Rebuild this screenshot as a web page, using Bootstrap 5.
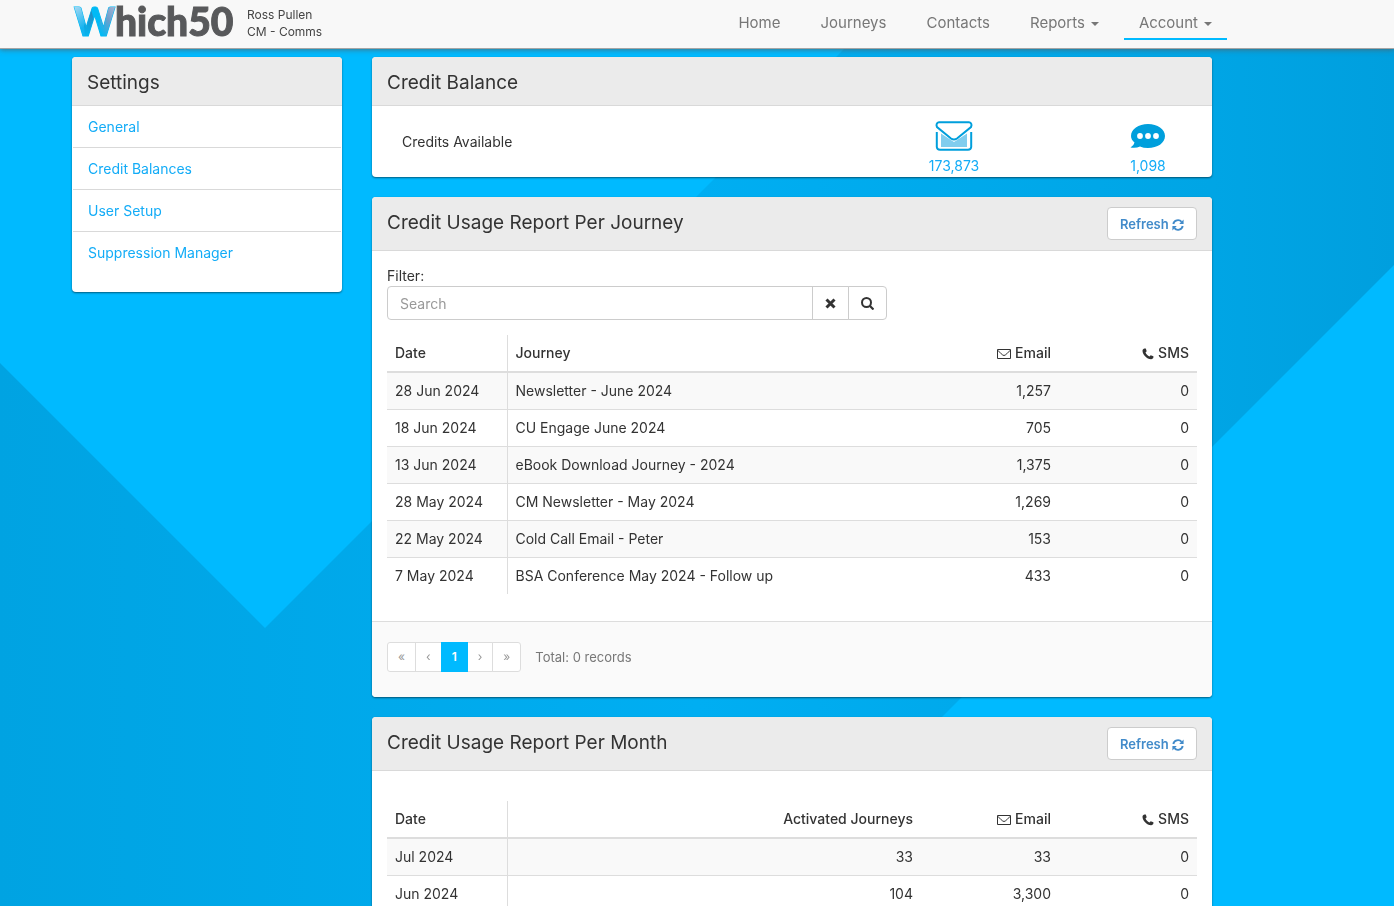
<!DOCTYPE html>
<html lang="en">
<head>
<meta charset="utf-8">
<meta name="viewport" content="width=device-width, initial-scale=1">
<title>Credit Balances - Which50</title>
<link href="https://cdn.jsdelivr.net/npm/bootstrap@5.3.0/dist/css/bootstrap.min.css" rel="stylesheet">
<style>
body{font-family:Inter,"Open Sans",sans-serif;font-size:14px;line-height:20px;color:#333;background:#00baff}
a{color:#13acf7;text-decoration:none}
.backdrop{position:fixed;inset:0;width:100%;height:100%;z-index:-1}
.page-col{max-width:1170px;margin-left:57px;padding:0 15px}
.page-col.bar{padding-right:0}
.columns{column-gap:30px}
.topbar{background:#f8f8f8;height:49px;border-bottom:1px solid #a5a5a5;box-shadow:0 1px 5px rgba(90,90,90,.7)}
.who{font-size:12px;line-height:17px;color:#444;padding:6px 0 0 11px}
.topbar .nav-link{color:#777;font-size:15px;padding:13px 20px 7px;line-height:20px}
.topbar .nav-link.active{padding:13px 15px 5px;border-bottom:2px solid #00baff;margin-left:5px}
.topbar .dropdown-toggle::after{border-top-width:4px;border-left-width:4px;border-right-width:4px;margin-left:6px;vertical-align:2px}
.side{flex:0 0 270px}
.panel{background:#fff;border-radius:4px;box-shadow:0 1px 2px rgba(0,0,0,.5);overflow:hidden;margin-bottom:20px}
.panel-head{background:#ebebeb;border-bottom:1px solid #d9d9d9;padding:10px 15px 6px}
.panel-head h2{font-size:19px;line-height:32px;margin:0;font-weight:400}
.panel-head.tall{padding-bottom:10px}
.panel-main{padding:15px 15px 0}
.menu{padding-bottom:19px}
.menu a{display:block;padding:11px 15px 10px;line-height:20px;border-bottom:1px solid #d9d9d9;margin:0 1px}
.menu a:last-child{border-bottom:0}
.btn-refresh{background:#fff;border:1px solid #ccc;border-radius:4px;color:#428bca;font-size:13px;font-weight:600;line-height:20px;padding:5px 12px;height:33px}
.search{max-width:500px}
.search .form-control,.search .btn{height:34px;font-size:14px;border:1px solid #ccc;background:#fff;padding:6px 12px;line-height:20px;color:#333;border-radius:4px}
.search .form-control::placeholder{color:#999}
.search .btn{display:flex;align-items:center}
.report{margin:15px 0 0;--bs-table-striped-bg:#f9f9f9;--bs-table-striped-color:#333;color:#333;table-layout:fixed}
.report>:not(caption)>*>*{padding:8px;line-height:20px;border-bottom:1px solid #ddd}
.report thead th{font-weight:500;border-bottom-width:2px}
.report tbody tr:last-child>*{border-bottom:0}
.report .c-date{width:120px;border-right:1px solid #ddd}
.report .c-num{width:138px}
.panel-foot{background:#fafafa;border-top:1px solid #ddd;padding:20px 15px 25px;margin-top:27px}
.pagination .page-link{font-size:12px;line-height:18px;height:30px;padding:5px 10px;color:#999;border-color:#ddd}
.pagination .page-item:first-child .page-link{border-radius:3px 0 0 3px}
.pagination .page-item:last-child .page-link{border-radius:0 3px 3px 0}
.pagination .page-item.active .page-link{background:#00baff;border-color:#00baff;color:#fff;font-weight:600}
.total{font-size:13px;color:#777;margin-left:14px}
.credits{height:71px;padding-left:30px}
.credit{width:128px;padding-top:15px}
.credit.mail{width:260px}
.credit svg{display:block;margin:0 auto 5px}
</style>
</head>
<body>
<svg class="backdrop" viewBox="0 0 1394 906" preserveAspectRatio="xMinYMin slice" aria-hidden="true">
  <defs><linearGradient id="band" gradientUnits="userSpaceOnUse" x1="0" y1="0" x2="1394" y2="0"><stop offset="0" stop-color="#00a3e2"/><stop offset=".5" stop-color="#00aef2"/><stop offset=".87" stop-color="#00a5e5"/><stop offset="1" stop-color="#009fde"/></linearGradient></defs>
  <path fill="url(#band)" d="M0 363 265 628 893 0H1394V265L753 906H0Z"/>
</svg>
<header class="topbar position-relative">
  <div class="page-col bar d-flex align-items-start">
    <a href="#" aria-label="Which50">
      <svg class="d-block" width="164" height="48" viewBox="0 0 164 48">
        <defs>
          <linearGradient id="wa" x1="0" y1="0" x2=".4" y2="1"><stop offset="0" stop-color="#b5dcf3"/><stop offset=".8" stop-color="#14b4f0"/></linearGradient>
          <linearGradient id="wb" x1="0" y1="0" x2="0" y2="1"><stop offset="0" stop-color="#2f7fb5"/><stop offset="1" stop-color="#00baf5"/></linearGradient>
          <linearGradient id="wd" x1="1" y1="0" x2=".3" y2="1"><stop offset="0" stop-color="#a9b6d5"/><stop offset=".5" stop-color="#6d9fcb"/><stop offset="1" stop-color="#00baf5"/></linearGradient>
          <clipPath id="wc"><text x="2" y="36" font-family="Lato,sans-serif" font-weight="900" font-size="39">W</text></clipPath>
        </defs>
        <text x="2" y="36" font-family="Lato,sans-serif" font-weight="900" font-size="39"><tspan fill="#00baf5" stroke="#00baf5">W</tspan><tspan fill="#58595b" stroke="#58595b">hich50</tspan></text>
        <g clip-path="url(#wc)"><path fill="url(#wa)" d="M0 6H11L18 38H8Z"/><path fill="url(#wb)" d="M18 6 22 20 16 38H13L12 26Z"/><path fill="url(#wd)" d="M44 6H32L27 25 28 38H34Z"/></g>
      </svg>
    </a>
    <div class="who">Ross Pullen<br>CM - Comms</div>
    <nav class="nav ms-auto flex-nowrap" aria-label="Main">
      <a class="nav-link" href="#">Home</a>
      <a class="nav-link" href="#">Journeys</a>
      <a class="nav-link" href="#">Contacts</a>
      <a class="nav-link dropdown-toggle" href="#">Reports</a>
      <a class="nav-link dropdown-toggle active" href="#">Account</a>
    </nav>
  </div>
</header>
<svg class="d-none">
  <symbol id="i-env" viewBox="0 0 14 12"><path d="M.5 1.500h13v9H.5zM.7 2.200C3 4.500 5.500 7.500 7 7.500S11 4.500 13.300 2.200" fill="none" stroke="currentColor"/></symbol>
  <symbol id="i-tel" viewBox="0 0 12 12"><path fill="currentColor" d="M2.500.4 3.800.6 4.700 3.200 3.500 4.400C4.200 6.100 5.600 7.500 7.500 8.500L8.700 7.200 11.400 8.300C11.700 9.700 11 11 9.300 11.300 5 11.500.3 6.500.5 2.600.7 1.300 1.500.6 2.500.4Z"/></symbol>
  <symbol id="i-ref" viewBox="0 0 12 12"><path d="M1.300 5A4.800 4.800 0 0 1 9.600 2.800M10.700 7A4.800 4.800 0 0 1 2.400 9.200" fill="none" stroke="currentColor" stroke-width="1.900"/><path fill="currentColor" d="M11.600.6V5H7.200ZM.4 11.400V7H4.800Z"/></symbol>
</svg>
<main class="page-col columns d-flex flex-column flex-lg-row pt-2">
  <aside class="side">
    <section class="panel">
      <div class="panel-head"><h2>Settings</h2></div>
      <nav class="menu" aria-label="Settings"><a href="#">General</a><a href="#">Credit Balances</a><a href="#">User Setup</a><a href="#">Suppression Manager</a></nav>
    </section>
  </aside>
  <div class="flex-grow-1">
    <section class="panel">
      <div class="panel-head"><h2>Credit Balance</h2></div>
      <div class="credits d-flex">
        <div class="flex-grow-1 align-self-center">Credits Available</div>
        <div class="credit mail text-center"><svg width="38" height="30" viewBox="0 0 38 30"><path d="M6 12.500 19 21l13-8.500V26H6Z" fill="#80cdee"/><path d="M4 1.300H34C36.500 1.500 37 4 36 6L22 17.500Q19 19.500 16 17.500L2 6C1 4 1.500 1.500 4 1.300Z" fill="#fff" stroke="#009fdc" stroke-width="2"/><path d="M1.800 11V26Q2 28.700 5 28.700H33Q36 28.700 36.200 26V11" fill="none" stroke="#009fdc" stroke-width="2"/></svg><a href="#">173,873</a></div>
        <div class="credit text-center"><svg width="36" height="30" viewBox="0 0 36 30"><path fill="#009fdc" d="M18 3C27.500 3 35 8 35 15S27.500 27 18 27Q13.500 27 10 25.500 6 27.500.5 26.500 4 24.500 4.500 21.500 1 18.500 1 15C1 8 8.500 3 18 3Z"/><g fill="#fff"><circle cx="10" cy="15" r="2.900"/><circle cx="18" cy="15" r="2.900"/><circle cx="26" cy="15" r="2.900"/></g></svg><a href="#">1,098</a></div>
      </div>
    </section>
    <section class="panel">
      <div class="panel-head tall d-flex justify-content-between"><h2>Credit Usage Report Per Journey</h2><button class="btn btn-refresh" type="button">Refresh <svg width="12" height="12"><use href="#i-ref"/></svg></button></div>
      <div class="panel-main">
        <label class="d-block" for="q">Filter:</label>
        <div class="input-group search">
          <input class="form-control" id="q" type="text" placeholder="Search">
          <button class="btn" type="button" aria-label="Clear"><svg width="11" height="11" viewBox="0 0 11 11"><path d="m1.500 1.500 8 8m0-8-8 8" stroke="#333" stroke-width="3"/></svg></button>
          <button class="btn" type="button" aria-label="Search"><svg width="13" height="13" viewBox="0 0 13 13"><circle cx="5.500" cy="5.500" r="4.500" fill="none" stroke="#333" stroke-width="2"/><path d="m9 9 3.500 3.500" stroke="#333" stroke-width="2.200"/></svg></button>
        </div>
        <table class="table table-striped report">
          <thead><tr><th class="c-date">Date</th><th>Journey</th><th class="c-num text-end"><svg width="14" height="12"><use href="#i-env"/></svg> Email</th><th class="c-num text-end"><svg width="12" height="12"><use href="#i-tel"/></svg> SMS</th></tr></thead>
          <tbody>
            <tr><td class="c-date">28 Jun 2024</td><td>Newsletter - June 2024</td><td class="text-end">1,257</td><td class="text-end">0</td></tr>
            <tr><td class="c-date">18 Jun 2024</td><td>CU Engage June 2024</td><td class="text-end">705</td><td class="text-end">0</td></tr>
            <tr><td class="c-date">13 Jun 2024</td><td>eBook Download Journey - 2024</td><td class="text-end">1,375</td><td class="text-end">0</td></tr>
            <tr><td class="c-date">28 May 2024</td><td>CM Newsletter - May 2024</td><td class="text-end">1,269</td><td class="text-end">0</td></tr>
            <tr><td class="c-date">22 May 2024</td><td>Cold Call Email - Peter</td><td class="text-end">153</td><td class="text-end">0</td></tr>
            <tr><td class="c-date">7 May 2024</td><td>BSA Conference May 2024 - Follow up</td><td class="text-end">433</td><td class="text-end">0</td></tr>
          </tbody>
        </table>
      </div>
      <div class="panel-foot d-flex align-items-center">
        <ul class="pagination mb-0"><li class="page-item"><a class="page-link" href="#">«</a></li><li class="page-item"><a class="page-link" href="#">‹</a></li><li class="page-item active"><a class="page-link" href="#">1</a></li><li class="page-item"><a class="page-link" href="#">›</a></li><li class="page-item"><a class="page-link" href="#">»</a></li></ul>
        <span class="total">Total: 0 records</span>
      </div>
    </section>
    <section class="panel">
      <div class="panel-head tall d-flex justify-content-between"><h2>Credit Usage Report Per Month</h2><button class="btn btn-refresh" type="button">Refresh <svg width="12" height="12"><use href="#i-ref"/></svg></button></div>
      <div class="panel-main pb-3">
        <table class="table table-striped report">
          <thead><tr><th class="c-date">Date</th><th class="text-end">Activated Journeys</th><th class="c-num text-end"><svg width="14" height="12"><use href="#i-env"/></svg> Email</th><th class="c-num text-end"><svg width="12" height="12"><use href="#i-tel"/></svg> SMS</th></tr></thead>
          <tbody>
            <tr><td class="c-date">Jul 2024</td><td class="text-end">33</td><td class="text-end">33</td><td class="text-end">0</td></tr>
            <tr><td class="c-date">Jun 2024</td><td class="text-end">104</td><td class="text-end">3,300</td><td class="text-end">0</td></tr>
          </tbody>
        </table>
      </div>
    </section>
  </div>
</main>
<script src="https://cdn.jsdelivr.net/npm/bootstrap@5.3.0/dist/js/bootstrap.bundle.min.js"></script>
</body>
</html>
